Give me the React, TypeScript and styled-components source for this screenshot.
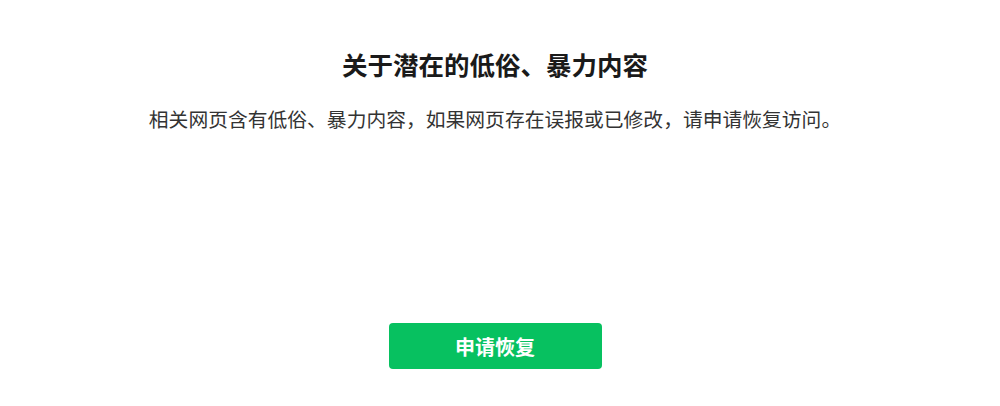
import React from 'react'
import styled, { createGlobalStyle } from 'styled-components'

const GlobalStyle = createGlobalStyle`
  html, body {
    margin: 0;
    padding: 0;
    background: #fff;
  }
  body {
    font-family: "Noto Sans CJK SC", "Noto Sans", sans-serif;
  }
`

const Page = styled.div`
  display: flex;
  flex-direction: column;
  align-items: center;
  width: 990px;
  height: 406px;
  padding-top: 45px;
  box-sizing: border-box;
`

const Title = styled.h2`
  margin: 0;
  font-size: 25.5px;
  line-height: 37px;
  font-weight: 700;
  color: #1a1a1a;
`

const Desc = styled.p`
  margin: 23px 0 0;
  font-size: 19.8px;
  line-height: 28px;
  color: #333;
`

const Button = styled.button`
  margin-top: 190px;
  width: 213px;
  height: 46px;
  border: none;
  border-radius: 4px;
  background: #07c160;
  color: #fff;
  font-family: inherit;
  font-size: 20px;
  font-weight: 700;
  cursor: pointer;
`

const App = () => {
  return (
    <>
      <GlobalStyle />
      <Page>
        <Title>关于潜在的低俗、暴力内容</Title>
        <Desc>相关网页含有低俗、暴力内容，如果网页存在误报或已修改，请申请恢复访问。</Desc>
        <Button>申请恢复</Button>
      </Page>
    </>
  )
}

export default App
